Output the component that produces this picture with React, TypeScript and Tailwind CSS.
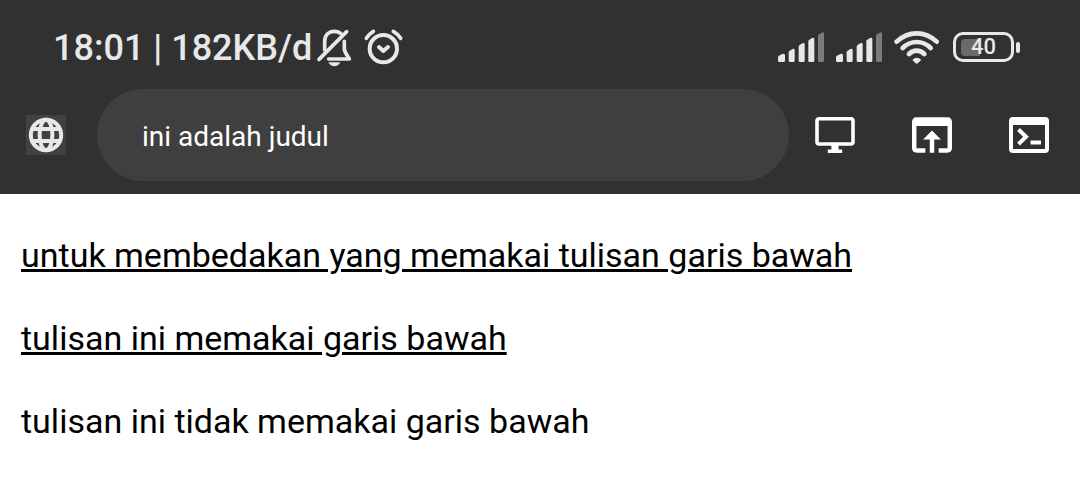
import React from "react";

const paragraphs = [
  { text: "untuk membedakan yang memakai tulisan garis bawah", underlined: true },
  { text: "tulisan ini memakai garis bawah", underlined: true },
  { text: "tulisan ini tidak memakai garis bawah", underlined: false },
];

function MutedBell() {
  return (
    <svg className="h-[39px] w-[37px] shrink-0" viewBox="20 35 111 117" fill="none" stroke="currentColor" strokeWidth="11" strokeLinecap="round" strokeLinejoin="round" aria-hidden="true">
      <path d="M29 129 112 46" />
      <path d="M46 101V76C46 57 58 45 75 45C83 45 89 47 94 51" />
      <path d="M105 75V98C106 108 114 118 120 128H58" />
      <path d="M57 138H93C89 146 82 150 75 150S61 146 57 138Z" fill="currentColor" stroke="none" />
    </svg>
  );
}

function Alarm() {
  return (
    <svg className="h-[39px] w-[41px] shrink-0" viewBox="162 35 123 117" fill="none" stroke="currentColor" strokeWidth="12" strokeLinecap="round" strokeLinejoin="round" aria-hidden="true">
      <circle cx="223" cy="97" r="41" />
      <path d="M172 66Q180 53 193 45M253 45Q267 53 275 66" strokeWidth="11" />
      <path d="m210 92 13 12 14-12" />
    </svg>
  );
}

function Signal() {
  return (
    <svg className="h-[30px] w-[46px] shrink-0" viewBox="39 50 138 90" fill="currentColor" aria-hidden="true">
      <path d="M39 126Q39 123 42 121L52 116Q60 113 60 120V136Q60 140 56 140H43Q39 140 39 136Z" />
      <path d="M71 111Q71 108 74 106L82 101Q89 98 89 104V136Q89 140 85 140H75Q71 140 71 136Z" />
      <path d="M101 94Q101 91 104 89L112 84Q119 81 119 87V136Q119 140 115 140H105Q101 140 101 136Z" />
      <path d="M130 78Q130 75 133 73L141 68Q148 65 148 71V136Q148 140 144 140H134Q130 140 130 136Z" />
      <path d="M159 62Q159 59 162 57L170 52Q177 49 177 55V136Q177 140 173 140H163Q159 140 159 136Z" fill="#7b7b7b" />
    </svg>
  );
}

function Wifi() {
  return (
    <svg className="h-[33px] w-[45px] shrink-0" viewBox="27 44 135 99" fill="none" stroke="currentColor" strokeWidth="14" strokeLinecap="round" aria-hidden="true">
      <path d="M35 76Q61 51 95 51T155 76" />
      <path d="M53 95Q71 77 95 77T137 95" />
      <path d="M72 113Q82 103 95 103T118 113" />
      <path d="M82 131Q95 118 109 131L99 140Q95 144 91 140Z" fill="currentColor" stroke="none" />
    </svg>
  );
}

function Battery() {
  return (
    <div className="flex items-center gap-[2px] pl-[2px]">
      <div className="relative flex h-[30px] w-[61px] items-center rounded-[10px] border-3 border-current pl-[5px]">
        <div className="h-[17px] w-[19px] rounded-l-[4px] bg-[#6a6a6a]" />
        <span className="absolute inset-0 flex items-center justify-center text-[22px] leading-6 font-medium">40</span>
      </div>
      <div className="h-[11px] w-1 rounded-[2px] bg-current" />
    </div>
  );
}

function GlobeIcon() {
  return (
    <svg className="size-9 shrink-0" viewBox="0 0 36 36" fill="none" stroke="currentColor" strokeWidth="4" aria-hidden="true">
      <circle cx="18" cy="18" r="15.2" />
      <ellipse cx="18" cy="18" rx="6.4" ry="15.2" />
      <path d="M4 12H32M4 24H32" />
    </svg>
  );
}

function DesktopIcon() {
  return (
    <svg className="h-9 w-10" viewBox="1 2 22 20" fill="currentColor" aria-hidden="true">
      <path d="M21 2H3c-1.1 0-2 .9-2 2v12c0 1.1.9 2 2 2h7v2H8v2h8v-2h-2v-2h7c1.1 0 2-.9 2-2V4c0-1.1-.9-2-2-2zm0 14H3V4h18v12z" />
    </svg>
  );
}

function OpenIcon() {
  return (
    <svg className="h-9 w-10" viewBox="3 4 18 16" fill="currentColor" aria-hidden="true">
      <path d="M19 4H5c-1.11 0-2 .9-2 2v12c0 1.1.89 2 2 2h4v-2H5V8h14v10h-4v2h4c1.1 0 2-.9 2-2V6c0-1.1-.89-2-2-2zm-7 6l-4 4h3v6h2v-6h3l-4-4z" />
    </svg>
  );
}

function ConsoleIcon() {
  return (
    <svg className="h-9 w-10" viewBox="0 0 40 36" fill="none" stroke="currentColor" aria-hidden="true">
      <path fill="currentColor" stroke="none" fillRule="evenodd" d="M4 0H36Q40 0 40 4V32Q40 36 36 36H4Q0 36 0 32V4Q0 0 4 0ZM4 8V32H36V8Z" />
      <path d="m9.5 12.5 7.5 7.3-7.5 7.3" strokeWidth="4" />
      <path d="M21.5 25.5h10.5" strokeWidth="4" />
    </svg>
  );
}

export default function App() {
  return (
    <div className="min-h-screen bg-white font-['Roboto',sans-serif] text-black">
      <header className="bg-[#313131] pb-[13px]">
        <div className="flex items-center justify-between pt-[25px] pr-[60px] pb-5 pl-[53px] text-[#e8e8e8]">
          <div className="flex items-center">
            <span className="pt-[2px] text-[36px] leading-[42px] font-medium">18:01 | 182KB/d</span>
            <span className="ml-1 flex gap-[10px]">
              <MutedBell />
              <Alarm />
            </span>
          </div>
          <div className="flex items-center gap-3">
            <Signal />
            <Signal />
            <Wifi />
            <Battery />
          </div>
        </div>
        <div className="flex items-center pr-[31px] pl-[26px] text-white">
          <button type="button" aria-label="Situs" className="flex size-10 shrink-0 items-center justify-center bg-[#414141] text-[#e8e8e8]">
            <GlobeIcon />
          </button>
          <input
            type="text"
            aria-label="Judul"
            defaultValue="ini adalah judul"
            className="mr-[26px] ml-[31px] h-[92px] min-w-0 flex-1 rounded-full bg-[#3f3f3f] px-[45px] pt-[2px] text-[28px] outline-none"
          />
          <div className="flex gap-[57px]">
            <button type="button" aria-label="Desktop"><DesktopIcon /></button>
            <button type="button" aria-label="Buka"><OpenIcon /></button>
            <button type="button" aria-label="Konsol"><ConsoleIcon /></button>
          </div>
        </div>
      </header>
      <main className="flex flex-col items-start gap-[42px] px-[21px] py-[41px] text-[34px] leading-[41px]">
        {paragraphs.map((p) => (
          <p key={p.text} className={p.underlined ? "underline decoration-3" : ""}>
            {p.text}
          </p>
        ))}
      </main>
    </div>
  );
}
